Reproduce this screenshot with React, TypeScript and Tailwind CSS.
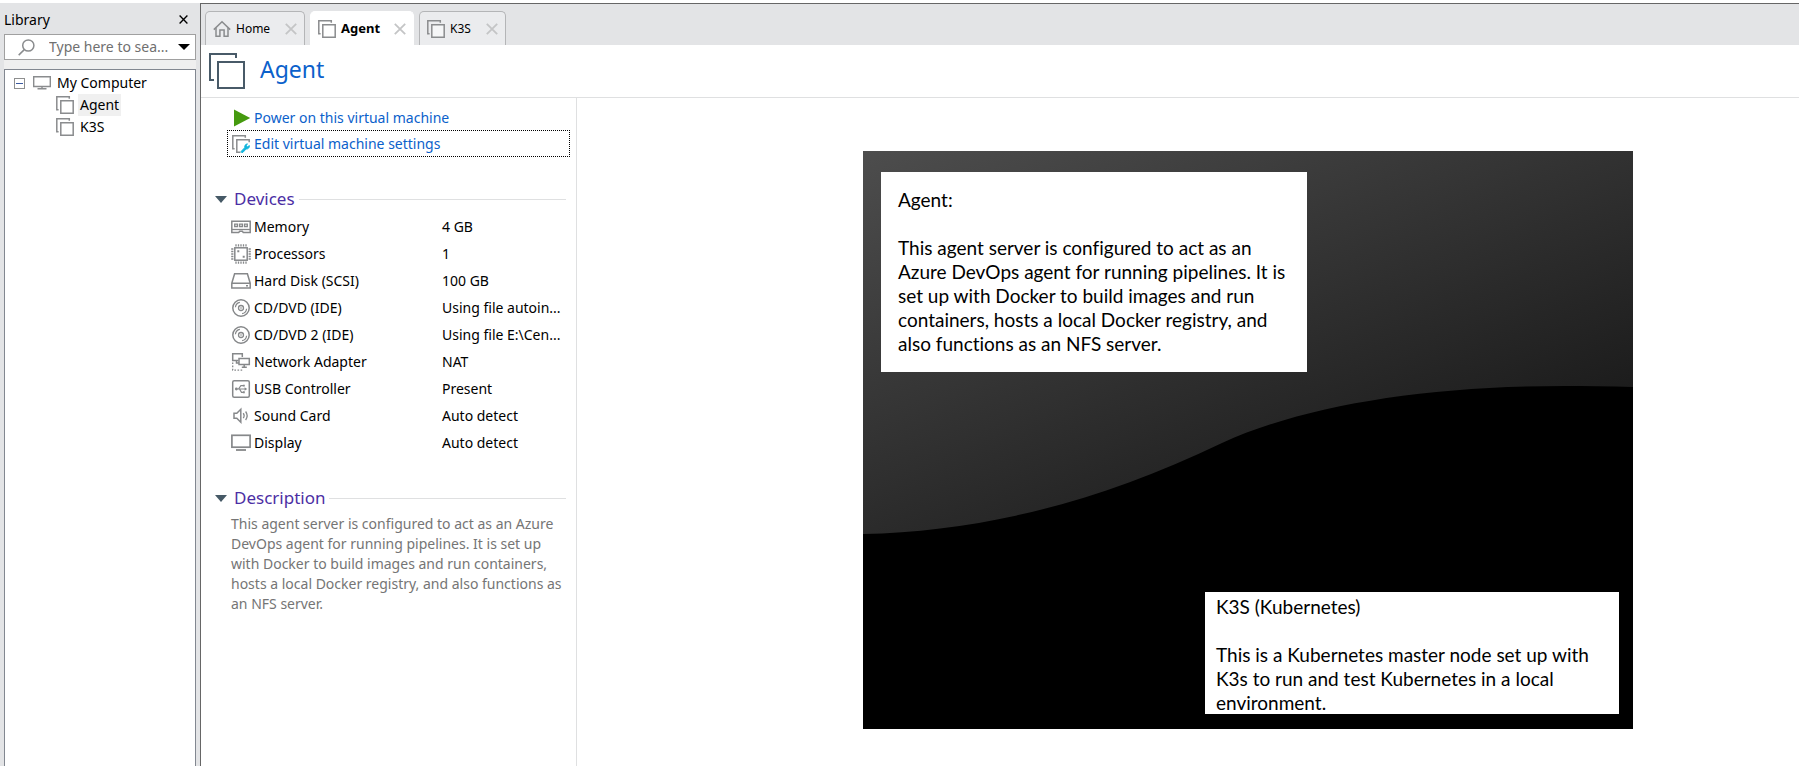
import type { ReactNode } from "react";

type IconProps = { className?: string };

function VmIcon({ className = "size-[18px]" }: IconProps) {
  return (
    <svg viewBox="0 0 18 18" className={`shrink-0 ${className}`} fill="none" stroke="#8a8c8e" strokeWidth="1.5" aria-hidden="true">
      <path d="M13.300 2.800V.8H.8v13h1.800" />
      <path d="M4.800 4.800h12.400v12.400H4.800z" fill="#fff" fillOpacity=".5" />
    </svg>
  );
}

function VmLargeIcon() {
  return (
    <svg viewBox="0 0 36 36" className="size-9 shrink-0" fill="none" stroke="#485a68" strokeWidth="2" aria-hidden="true">
      <path d="M27 5V1H1v26h4" />
      <path d="M9 9h26v26H9z" />
    </svg>
  );
}

function HomeIcon() {
  return (
    <svg viewBox="0 0 18 18" className="size-[18px] shrink-0" fill="none" stroke="#8a8c8e" strokeWidth="1.5" aria-hidden="true">
      <path d="M.8 9.600 9 1.700l8.200 7.900" />
      <path d="M3 8v8.300h3.900V9.900h4.200v6.400H15V8" />
    </svg>
  );
}

function MonitorIcon() {
  return (
    <svg viewBox="0 0 18 14" className="h-3.5 w-[18px] shrink-0" fill="none" stroke="#8a8c8e" strokeWidth="1.400" aria-hidden="true">
      <path d="M.7.7h16.600v9.800H.7z" />
      <path d="M9 10.500v2M4.500 12.800h9" />
    </svg>
  );
}

function SearchIcon() {
  return (
    <svg viewBox="0 0 17 17" className="size-[17px] shrink-0" fill="none" stroke="#8a8c8e" strokeWidth="1.5" aria-hidden="true">
      <circle cx="10.300" cy="6.500" r="5.600" />
      <path d="M6.300 10.600.7 16.100" />
    </svg>
  );
}

function CloseIcon({ className }: IconProps) {
  return (
    <svg viewBox="0 0 12 12" className={className} fill="none" stroke="currentColor" strokeWidth="1.800" aria-hidden="true">
      <path d="m.8.8 10.400 10.400M11.200.8.8 11.200" />
    </svg>
  );
}

function PlayIcon() {
  return (
    <svg viewBox="0 0 18 18" className="size-[18px]" aria-hidden="true">
      <path d="M1 .5 17.200 9 1 17.500z" fill="#459a0f" />
    </svg>
  );
}

function EditIcon() {
  return (
    <svg viewBox="0 0 18 18" className="size-[18px]" fill="none" stroke="#8a8c8e" strokeWidth="1.500" aria-hidden="true">
      <path d="M13.300 2.800V.8H.8v13h1.800" />
      <path d="M17.200 7.300V4.800H4.800v12.400h3.700" />
      <path
        d="M9.300 16.200 12.700 12.700c-.4-1.800.7-3.600 2.700-3.900l-1.100 1.900 1.200 1.100 1.900-1.200c.3 2-1.300 3.700-3.300 3.400l-3.200 3.400c-1 .7-2.200-.3-1.600-1.200z"
        fill="#12b5dc"
        stroke="#12b5dc"
        strokeWidth=".9"
      />
    </svg>
  );
}

function DeviceIcon({ children }: { children: ReactNode }) {
  return (
    <svg viewBox="0 0 20 20" className="size-5" fill="none" stroke="#86888a" strokeWidth="1.500" aria-hidden="true">
      {children}
    </svg>
  );
}

const discIcon = (
  <DeviceIcon>
    <circle cx="10" cy="10" r="8.200" />
    <circle cx="10" cy="10" r="2.500" strokeWidth="1.300" />
    <circle cx="10" cy="10" r=".8" fill="#86888a" stroke="none" />
    <path d="M4.400 9.200c.3-2.500 2.100-4.500 4.500-4.900M15.600 10.800c-.3 2.500-2.100 4.500-4.500 4.900" strokeWidth="1.200" />
  </DeviceIcon>
);

const devices: { name: string; value: string; icon: ReactNode }[] = [
  {
    name: "Memory",
    value: "4 GB",
    icon: (
      <DeviceIcon>
        <path d="M.8 4.200h18.400v11.300h-6.900l-1-1.200H8.700l-1 1.200H.8z" />
        <path d="M3.700 7.200h2.800v2.300H3.700zM8.600 7.200h2.800v2.300H8.600zM13.500 7.200h2.800v2.300h-2.800z" strokeWidth="1.300" />
        <path d="M1 12.500h18" strokeWidth="1.300" />
      </DeviceIcon>
    ),
  },
  {
    name: "Processors",
    value: "1",
    icon: (
      <DeviceIcon>
        <rect x="3.800" y="3.800" width="12.400" height="12.400" />
        <path d="M5 .2v2.200M7.500.2v2.200M10 .2v2.200M12.500.2v2.200M15 .2v2.200M5 17.600v2.200M7.500 17.600v2.200M10 17.600v2.200M12.500 17.600v2.200M15 17.600v2.200M.2 5h2.200M.2 7.500h2.200M.2 10h2.200M.2 12.500h2.200M.2 15h2.200M17.600 5h2.200M17.600 7.500h2.200M17.600 10h2.200M17.600 12.500h2.200M17.600 15h2.200" strokeWidth="1.300" />
        <path d="M6.300 6.300h2v2h-2zM11.700 11.700h2v2h-2z" fill="#86888a" stroke="none" />
      </DeviceIcon>
    ),
  },
  {
    name: "Hard Disk (SCSI)",
    value: "100 GB",
    icon: (
      <DeviceIcon>
        <path d="M.8 12.200 3.600 2.700h12.800l2.800 9.500v4.900H.8zM.8 12.200h18.400" />
        <path d="M15 14.700h2" />
      </DeviceIcon>
    ),
  },
  { name: "CD/DVD (IDE)", value: "Using file autoin...", icon: discIcon },
  { name: "CD/DVD 2 (IDE)", value: "Using file E:\\Cen...", icon: discIcon },
  {
    name: "Network Adapter",
    value: "NAT",
    icon: (
      <DeviceIcon>
        <path d="M7.500 8.600H1.700V1.700h9.600v3.200" />
        <path d="M8 6.400h10.300v6.200H8zM13.200 12.600v2.300M10.800 15.200h5M5.500 8.600V11h2.300" />
        <path d="M1.700 10.500v7.600h11" strokeDasharray="1.600 1.500" strokeWidth="1.300" />
      </DeviceIcon>
    ),
  },
  {
    name: "USB Controller",
    value: "Present",
    icon: (
      <DeviceIcon>
        <rect x="1.700" y="1.700" width="16.600" height="16.600" rx="1.500" />
        <path d="M5 10h10M7.500 10l2.400-3.300h2.600M8.500 10l2 3.300h2" strokeWidth="1.200" />
        <circle cx="5.300" cy="10" r="1.400" fill="#86888a" stroke="none" />
        <path d="m13.600 8.200 2.600 1.800-2.600 1.800zM11.900 5.700h1.900v1.900h-1.900zM11.900 12.300h1.900v1.900h-1.900z" fill="#86888a" stroke="none" />
      </DeviceIcon>
    ),
  },
  {
    name: "Sound Card",
    value: "Auto detect",
    icon: (
      <DeviceIcon>
        <path d="M3 7.200h2.800l4-4v13l-4-4H3z" />
        <path d="M12.300 7.200c1 1.500 1 3.500 0 5M14.600 5.500c1.900 2.600 1.900 5.900 0 8.500" strokeWidth="1.300" />
      </DeviceIcon>
    ),
  },
  {
    name: "Display",
    value: "Auto detect",
    icon: (
      <DeviceIcon>
        <rect x=".9" y="2.300" width="18.200" height="11.900" strokeWidth="1.700" />
        <path d="M5 17h10" strokeWidth="1.800" />
      </DeviceIcon>
    ),
  },
];

function LibraryPanel() {
  return (
    <aside className="mt-[3px] flex w-[200px] shrink-0 flex-col bg-[#e3e4e6] pr-1 pl-1">
      <div className="flex h-[31px] items-center justify-between pt-0.5 pr-2">
        <h2 className="text-sm">Library</h2>
        <button type="button" aria-label="Close library" className="p-0">
          <CloseIcon className="size-[9px]" />
        </button>
      </div>
      <div className="flex h-[26px] items-center border border-[#a0a0a0] bg-white pr-[5px] pl-[13px]">
        <SearchIcon />
        <input
          type="text"
          aria-label="Search the library"
          placeholder="Type here to sea..."
          className="ml-3.5 w-0 min-w-0 flex-1 appearance-none bg-transparent text-sm outline-none placeholder:text-[#707070]"
        />
        <button type="button" aria-label="Search options" className="ml-1">
          <svg viewBox="0 0 12 6" className="h-1.5 w-3" aria-hidden="true">
            <path d="M0 0h12L6 6z" />
          </svg>
        </button>
      </div>
      <div className="h-[9px] bg-[#efefef]" />
      <nav aria-label="Virtual machines" className="flex-1 border border-b-0 border-[#828790] bg-white pt-0.5 pl-[9px] text-sm">
        <ul>
          <li>
            <div className="flex h-[22px] items-center">
              <button type="button" aria-label="Collapse My Computer" className="flex size-[11px] items-center justify-center border border-[#8e8f8f] bg-white">
                <span className="h-px w-[7px] bg-[#3b5aa0]" />
              </button>
              <span className="ml-2 flex items-center gap-1.5">
                <MonitorIcon />
                My Computer
              </span>
            </div>
            <ul className="pl-[42px]">
              <li className="flex h-[22px] items-center gap-1">
                <VmIcon />
                <a href="#agent" className="bg-[#f0f0f0] px-0.5 leading-[22px]">Agent</a>
              </li>
              <li className="flex h-[22px] items-center gap-1">
                <VmIcon />
                <a href="#k3s" className="px-0.5 leading-[22px]">K3S</a>
              </li>
            </ul>
          </li>
        </ul>
      </nav>
    </aside>
  );
}

function Tab({ label, icon, width, active = false }: { label: string; icon: ReactNode; width: string; active?: boolean }) {
  return (
    <div
      className={`flex h-[34px] items-center rounded-t-[5px] border border-b-0 px-[7px] ${width} ${
        active ? "border-white bg-white" : "border-[#b4b5b7] bg-[#ebecee]"
      }`}
    >
      <button type="button" role="tab" aria-selected={active} className={`flex flex-1 items-center gap-[5px] ${active ? "text-[13px] font-bold" : "text-xs"}`}>
        {icon}
        {label}
      </button>
      <button type="button" aria-label={`Close ${label}`} className="text-[#c4c5c6]">
        <CloseIcon className="size-3" />
      </button>
    </div>
  );
}

function SectionHeading({ children }: { children: ReactNode }) {
  return (
    <h2 className="flex h-7 items-center pr-[10px] pl-3.5 text-[#4b2ea4]">
      <button type="button" className="flex items-center gap-[7px] text-[17px]">
        <svg viewBox="0 0 12 7" className="h-[7px] w-3" aria-hidden="true">
          <path d="M0 0h12L6 7z" fill="#465966" />
        </svg>
        {children}
      </button>
      <span className="ml-1 h-px flex-1 bg-[#dfe0e1]" />
    </h2>
  );
}

function DetailsPanel() {
  return (
    <section className="w-[376px] shrink-0 border-r border-[#dfe0e1] pt-[7px] text-sm">
      <div className="pr-1.5 pl-[26px] text-[#0b61cb]">
        <button type="button" className="flex h-[25px] w-full items-center gap-[3px] pl-1.5">
          <PlayIcon />
          Power on this virtual machine
        </button>
        <button type="button" className="flex h-[27px] w-full items-center gap-1 border border-dotted border-black pl-1">
          <EditIcon />
          Edit virtual machine settings
        </button>
      </div>

      <div className="mt-7">
        <SectionHeading>Devices</SectionHeading>
        <table className="ml-[30px] w-[335px] table-fixed border-collapse text-left">
          <tbody>
            {devices.map((device) => (
              <tr key={device.name} className="h-[27px]">
                <td className="w-[23px] p-0">{device.icon}</td>
                <th scope="row" className="w-[188px] p-0 font-normal">{device.name}</th>
                <td className="p-0 whitespace-nowrap">{device.value}</td>
              </tr>
            ))}
          </tbody>
        </table>
      </div>

      <div className="mt-7">
        <SectionHeading>Description</SectionHeading>
        <p className="mt-0.5 pr-3 pl-[30px] leading-5 text-[#757575]">
          This agent server is configured to act as an Azure DevOps agent for running pipelines. It is set up with Docker to build images and run containers, hosts a local Docker registry, and also functions as an NFS server.
        </p>
      </div>
    </section>
  );
}

function ConsolePreview() {
  return (
    <section aria-label="Console preview" className="flex flex-1 justify-center pt-[53px] pl-[120px]">
      <div className="relative h-[578px] w-[770px] shrink-0 overflow-hidden bg-black font-['Lato',sans-serif] text-[19px] leading-6 [font-variant-ligatures:none]">
        <svg viewBox="0 0 770 578" className="size-full" aria-hidden="true">
          <defs>
            <linearGradient id="sheen" gradientUnits="userSpaceOnUse" x1="0" y1="0" x2="191" y2="473">
              <stop offset="0" stopColor="#4d4d4d" />
              <stop offset="1" stopColor="#1c1c1c" />
            </linearGradient>
          </defs>
          <path d="M0 0H770V236C746 235 724 235 701 235C560 235 440 255 359 292C230 354 115 380 0 383Z" fill="url(#sheen)" />
        </svg>
        <div className="absolute top-[21px] left-[18px] h-[200px] w-[426px] bg-white pt-4 pr-4 pl-[17px]">
          <p>Agent:</p>
          <p className="mt-6">
            This agent server is configured to act as an Azure DevOps agent for running pipelines. It is set up with Docker to build images and run containers, hosts a local Docker registry, and also functions as an NFS server.
          </p>
        </div>
        <div className="absolute top-[441px] left-[342px] h-[122px] w-[414px] bg-white pt-[3px] pr-4 pl-[11px]">
          <p>K3S (Kubernetes)</p>
          <p className="mt-6">
            This is a Kubernetes master node set up with K3s to run and test Kubernetes in a local environment.
          </p>
        </div>
      </div>
    </section>
  );
}

export default function App() {
  return (
    <div className="flex min-h-screen bg-white font-['Noto_Sans',sans-serif] text-black">
      <LibraryPanel />
      <main className="mt-[3px] flex min-w-0 flex-1 flex-col border-l border-[#666]">
        <div role="tablist" className="flex h-[42px] items-end gap-[5px] border-t border-[#666] bg-[#e3e4e6] pl-1">
          <Tab label="Home" icon={<HomeIcon />} width="w-[100px]" />
          <Tab label="Agent" icon={<VmIcon />} width="w-[104px]" active />
          <Tab label="K3S" icon={<VmIcon />} width="w-[87px]" />
        </div>
        <header className="flex h-[53px] items-center gap-[15px] border-b border-[#dfe0e1] pl-2">
          <VmLargeIcon />
          <h1 className="pb-1 text-[23px] text-[#0b61cb]">Agent</h1>
        </header>
        <div className="flex flex-1">
          <DetailsPanel />
          <ConsolePreview />
        </div>
      </main>
    </div>
  );
}
